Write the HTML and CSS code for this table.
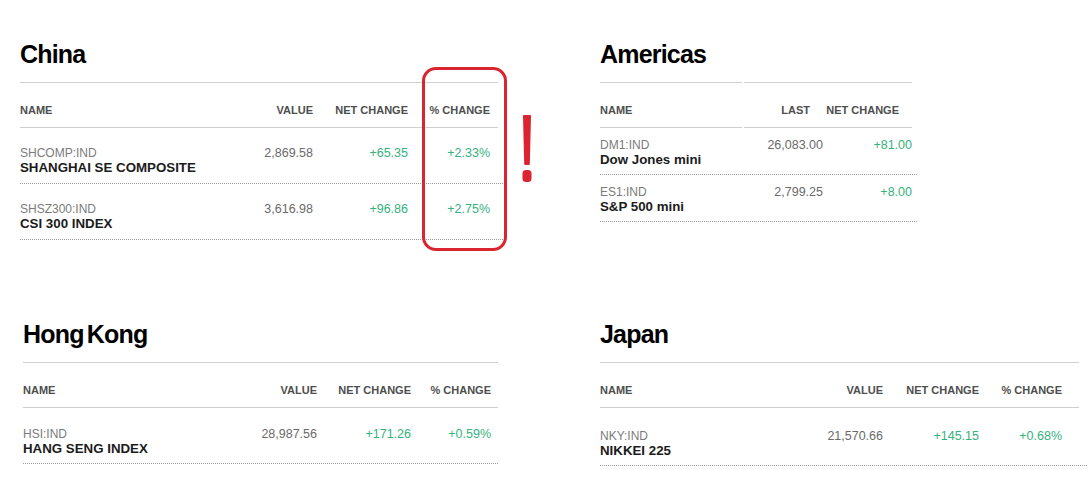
FILE: index.html
```html
<!DOCTYPE html>
<html lang="en">

<head>
    <meta charset="UTF-8">
    <meta name="viewport" content="width=device-width, initial-scale=1.0">
    <title>Markets</title>
    <link rel="stylesheet" href="styles.css">
</head>

<body>
    <div class="page">
        <!-- China -->
        <section class="market market-china">
            <h2 class="market-title">China</h2>
            <div class="quotes">
                <div class="quote-row quote-head">
                    <span class="col-name">NAME</span>
                    <span class="col-num">VALUE</span>
                    <span class="col-num">NET CHANGE</span>
                    <span class="col-num">% CHANGE</span>
                </div>
                <div class="quote-row">
                    <div class="col-name">
                        <span class="ticker">SHCOMP:IND</span>
                        <span class="index-name">SHANGHAI SE COMPOSITE</span>
                    </div>
                    <span class="col-num price">2,869.58</span>
                    <span class="col-num up">+65.35</span>
                    <span class="col-num up">+2.33%</span>
                </div>
                <div class="quote-row">
                    <div class="col-name">
                        <span class="ticker">SHSZ300:IND</span>
                        <span class="index-name">CSI 300 INDEX</span>
                    </div>
                    <span class="col-num price">3,616.98</span>
                    <span class="col-num up">+96.86</span>
                    <span class="col-num up">+2.75%</span>
                </div>
            </div>
            <!-- 红框标注 -->
            <div class="mark-box"></div>
            <svg class="mark-bang" width="14" height="70" viewBox="0 0 14 70">
                <path d="M3 2 Q3 1 4 1 H10 Q11 1 11 2 L9.8 50 Q9.7 51 8.8 51 H5.2 Q4.3 51 4.2 50 Z" fill="#dc2430"/>
                <rect x="2.5" y="56" width="9" height="12" rx="3.5" fill="#dc2430"/>
            </svg>
        </section>

        <!-- Americas -->
        <section class="market market-americas">
            <h2 class="market-title">Americas</h2>
            <div class="quotes">
                <div class="quote-row quote-head">
                    <span class="col-name">NAME</span>
                    <span class="col-num">LAST</span>
                    <span class="col-num">NET CHANGE</span>
                </div>
                <div class="quote-row">
                    <div class="col-name">
                        <span class="ticker">DM1:IND</span>
                        <span class="index-name">Dow Jones mini</span>
                    </div>
                    <span class="col-num price">26,083.00</span>
                    <span class="col-num up">+81.00</span>
                </div>
                <div class="quote-row">
                    <div class="col-name">
                        <span class="ticker">ES1:IND</span>
                        <span class="index-name">S&amp;P 500 mini</span>
                    </div>
                    <span class="col-num price">2,799.25</span>
                    <span class="col-num up">+8.00</span>
                </div>
            </div>
        </section>

        <!-- Hong Kong -->
        <section class="market market-hk">
            <h2 class="market-title">Hong Kong</h2>
            <div class="quotes">
                <div class="quote-row quote-head">
                    <span class="col-name">NAME</span>
                    <span class="col-num">VALUE</span>
                    <span class="col-num">NET CHANGE</span>
                    <span class="col-num">% CHANGE</span>
                </div>
                <div class="quote-row">
                    <div class="col-name">
                        <span class="ticker">HSI:IND</span>
                        <span class="index-name">HANG SENG INDEX</span>
                    </div>
                    <span class="col-num price">28,987.56</span>
                    <span class="col-num up">+171.26</span>
                    <span class="col-num up">+0.59%</span>
                </div>
            </div>
        </section>

        <!-- Japan -->
        <section class="market market-japan">
            <h2 class="market-title">Japan</h2>
            <div class="quotes">
                <div class="quote-row quote-head">
                    <span class="col-name">NAME</span>
                    <span class="col-num">VALUE</span>
                    <span class="col-num">NET CHANGE</span>
                    <span class="col-num">% CHANGE</span>
                </div>
                <div class="quote-row">
                    <div class="col-name">
                        <span class="ticker">NKY:IND</span>
                        <span class="index-name">NIKKEI 225</span>
                    </div>
                    <span class="col-num price">21,570.66</span>
                    <span class="col-num up">+145.15</span>
                    <span class="col-num up">+0.68%</span>
                </div>
            </div>
        </section>
    </div>
</body>

</html>
```

FILE: styles.css
```css
* {
    margin: 0;
    padding: 0;
    box-sizing: border-box;
}

body {
    background: #fff;
    font-family: "Liberation Sans", Arial, sans-serif;
    color: #1e1e1e;
}

/* 两列两行的布局 */
.page {
    display: grid;
    grid-template-columns: 580px 511px;
    grid-template-rows: 280px auto;
    padding-top: 39px;
}

.market {
    position: relative;
    padding-left: 20px;
}

.market-hk {
    padding-left: 23px;
}

.market-title {
    font-size: 25px;
    line-height: 30px;
    font-weight: bold;
    letter-spacing: -0.8px;
    word-spacing: -3px;
    color: #000;
    margin-bottom: 13px;
}

/* 表格行 */
.quote-row {
    display: grid;
    border-bottom: 1px dotted #9a9a9a;
}

.quote-head {
    border-bottom: 0;
    font-size: 11px;
    line-height: 13px;
    font-weight: bold;
    color: #4e4e4e;
}

.quote-head span {
    border-top: 1px solid #cfcfcf;
    border-bottom: 1px solid #cfcfcf;
    padding: 21px 0 10px;
}

.col-num {
    text-align: right;
}

.col-name {
    display: flex;
    flex-direction: column;
}

.ticker {
    font-size: 12px;
    line-height: 14px;
    color: #7b7b7b;
}

.index-name {
    font-size: 13.3px;
    line-height: 15px;
    font-weight: bold;
    color: #1b1b1b;
}

.price,
.up {
    font-size: 12.5px;
    line-height: 14px;
}

.price {
    color: #6a6a6a;
}

.up {
    color: #34b27d;
}

/* 各市场的列宽 */
.market-china .quotes {
    width: 478px;
}

.market-china .quote-row {
    grid-template-columns: 1fr 80px 95px 90px;
    padding: 18px 5px 8px 0;
    margin-right: -5px;
}

.market-china .quote-head {
    padding: 0;
    margin-right: 0;
}

.market-china .quote-row > :last-child {
    padding-right: 8px;
}

.market-hk .quotes {
    width: 475px;
}

.market-hk .quote-row {
    grid-template-columns: 1fr 80px 94px 87px;
    padding: 19px 0 7px;
}

.market-hk .quote-head {
    padding: 0;
}

.market-hk .quote-row > :last-child {
    padding-right: 7px;
}

.market-japan .quotes {
    width: 479px;
}

.market-japan .quote-row {
    grid-template-columns: 1fr 80px 96px 100px;
    padding: 21px 8px 7px 0;
    margin-right: -8px;
}

.market-japan .quote-head {
    padding: 0;
    margin-right: 0;
}

.market-japan .quote-row > :last-child {
    padding-right: 17px;
}

.market-americas .quotes {
    width: 312px;
}

.market-americas .quote-row {
    grid-template-columns: 144px 79px 89px;
    padding: 10px 5px 7px 0;
    margin-right: -5px;
}

.market-americas .quote-head {
    padding: 0;
    margin-right: 0;
}

.market-americas .quote-head .col-name {
    margin-right: 2px;
}

.market-americas .quote-head .col-num {
    padding-right: 13px;
}

/* 红色标注 */
.mark-box {
    position: absolute;
    left: 422px;
    top: 28px;
    width: 85px;
    height: 184px;
    border: 3px solid #d9252f;
    border-radius: 14px;
}

.mark-bang {
    position: absolute;
    left: 520px;
    top: 75px;
}
```
